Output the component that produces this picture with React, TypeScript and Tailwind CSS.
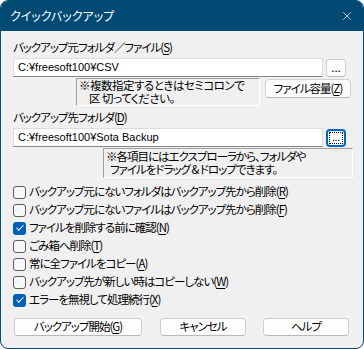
import { Check, X } from 'lucide-react';

const jp = "[font-family:'Noto_Sans_CJK_JP',sans-serif] [font-feature-settings:'palt']";

function Key({ k }: { k: string }) {
  return (
    <>
      (<u className="underline-offset-2">{k}</u>)
    </>
  );
}

function Btn({ children, className = '' }: { children: React.ReactNode; className?: string }) {
  return (
    <button
      className={`flex items-center justify-center rounded-[4px] border border-[#d0d0d0] border-b-[#b8b8b8] bg-[#fdfdfd] text-[11.5px] leading-none tracking-[-1px] text-black ${className}`}
    >
      {children}
    </button>
  );
}

function PathInput({ value }: { value: string }) {
  return (
    <div className="flex h-[19px] w-[310px] items-center border border-[#dcdcdc] border-b-[#868686] bg-white pl-[4px] text-[11px] leading-none text-black [font-family:'Liberation_Sans',sans-serif]">
      {value}
    </div>
  );
}

function CheckRow({ label, k, checked }: { label: string; k: string; checked?: boolean }) {
  return (
    <div className="flex h-[18px] items-center gap-[3px]">
      {checked ? (
        <span className="flex h-[13px] w-[13px] items-center justify-center rounded-[3px] bg-[#005fb8]">
          <Check size={10} strokeWidth={2.5} className="text-white" />
        </span>
      ) : (
        <span className="h-[13px] w-[13px] rounded-[3px] border border-[#5d5d5d] bg-[#f7f7f7]" />
      )}
      <span className="text-[11.5px] leading-none tracking-[-1px]">
        {label}
        <Key k={k} />
      </span>
    </div>
  );
}

export default function App() {
  return (
    <div className={`h-[349px] w-[364px] bg-white text-black ${jp}`}>
      <div className="flex h-full flex-col overflow-hidden rounded-[8px] border border-[#014a74] bg-[#f0f0f0]">
        <div className="flex h-[30px] shrink-0 items-center justify-between bg-[#014a74] pl-[9px] pr-[9px] text-[12px] text-white">
          <span>クイックバックアップ</span>
          <X size={14} strokeWidth={1.2} />
        </div>

        <div className="flex flex-col pl-[12px] pt-[8px]">
          <div className="h-[16px] text-[11.5px] leading-[16px] tracking-[-1px]">
            バックアップ元フォルダ／ファイル<Key k="S" />
          </div>
          <div className="mt-[3px] flex items-center gap-[3px]">
            <PathInput value="C:¥freesoft100¥CSV" />
            <Btn className="h-[18px] w-[20px] text-[9px] tracking-normal">...</Btn>
          </div>
          <div className="flex items-start">
            <div className="ml-[63px] mt-[1px] h-[28px] w-[184px] border border-[#a0a0a0] border-b-white border-r-white pl-[2px] text-[11.5px] leading-[13px] tracking-[-0.5px]">
              <div>※複数指定するときはセミコロンで</div>
              <div className="pl-[10px]">区 切ってください。</div>
            </div>
            <Btn className="ml-[5px] mt-[2px] h-[19px] w-[86px]">
              ファイル容量<Key k="Z" />
            </Btn>
          </div>

          <div className="mt-[3px] h-[16px] text-[11.5px] leading-[16px] tracking-[-1px]">
            バックアップ先フォルダ<Key k="D" />
          </div>
          <div className="mt-[3px] flex items-center gap-[3px]">
            <PathInput value="C:¥freesoft100¥Sota Backup" />
            <button className="flex h-[18px] w-[20px] items-center justify-center rounded-[4px] border-2 border-[#0067c0] bg-[#fdfdfd] p-[1px]">
              <span className="flex h-full w-full items-end justify-center border border-dotted border-black pb-[1px] text-[9px] leading-none">
                ...
              </span>
            </button>
          </div>
          <div className="ml-[90px] mt-[1px] h-[30px] w-[250px] border border-[#a0a0a0] border-b-white border-r-white pl-[2px] pt-[1px] text-[11.5px] leading-[13px] tracking-[-1px]">
            <div>※各項目にはエクスプローラから、フォルダや</div>
            <div className="pl-[4px]">ファイルをドラッグ &amp; ドロップできます。</div>
          </div>

          <div className="mt-[5px] flex flex-col">
            <CheckRow label="バックアップ元にないフォルダはバックアップ先から削除" k="R" />
            <CheckRow label="バックアップ元にないファイルはバックアップ先から削除" k="F" />
            <CheckRow label="ファイルを削除する前に確認" k="N" checked />
            <CheckRow label="ごみ箱へ削除" k="T" />
            <CheckRow label="常に全ファイルをコピー" k="A" />
            <CheckRow label="バックアップ先が新しい時はコピーしない" k="W" />
            <CheckRow label="エラーを無視して処理続行" k="X" checked />
          </div>

          <div className="mt-[9px] flex items-center">
            <Btn className="ml-[1px] h-[18px] w-[128px]">
              バックアップ開始<Key k="G" />
            </Btn>
            <Btn className="ml-[18px] h-[18px] w-[86px]">キャンセル</Btn>
            <Btn className="ml-[17px] h-[18px] w-[86px]">ヘルプ</Btn>
          </div>
        </div>
      </div>
    </div>
  );
}
